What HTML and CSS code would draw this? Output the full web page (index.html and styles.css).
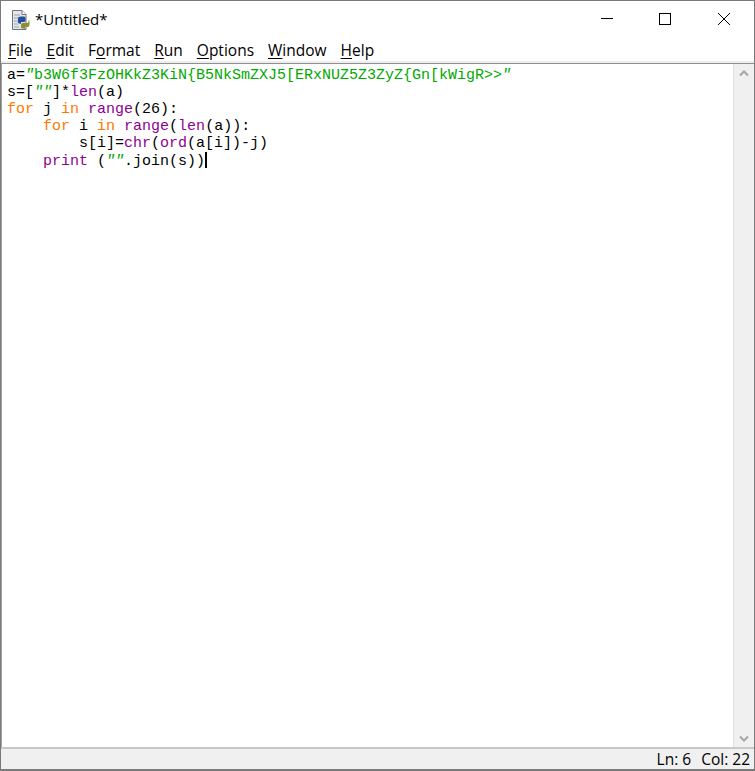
FILE: index.html
```
<!DOCTYPE html>
<html lang="en">
<head>
<meta charset="utf-8">
<title>*Untitled*</title>
<link rel="stylesheet" href="styles.css">
</head>
<body>
<div class="window">
  <header class="titlebar">
    <svg class="app-icon" width="20" height="22" viewBox="0 0 20 22">
      <path d="M2.5 1.5H12L16 5.5V20.5H2.5Z" fill="#e4e6ea" stroke="#6f7480"/>
      <path d="M12 1.5V5.5H16" fill="#fff" stroke="#6f7480"/>
      <path d="M4 6H10M4 9H9M4 12H8M4 15H8M4 18H9" stroke="#9aa0aa"/>
      <path d="M8 14V9.5Q8 7.5 11 7.5H14Q15.5 7.5 15.5 9.5V11.5Q15.5 13 13.5 13H11V15Z" fill="#1f4f9e"/>
      <path d="M11 19V15.5Q11 14 13 14H16.5Q18.5 14 18.5 12.5V11.5H19.5V16Q19.5 18 17.5 18H15V20Z" fill="#8b8f2e"/>
    </svg>
    <span class="title">*Untitled*</span>
    <div class="controls">
      <svg class="control" width="58" height="37" viewBox="0 0 58 37"><path d="M21 17.5H33" stroke="#000"/></svg>
      <svg class="control" width="58" height="37" viewBox="0 0 58 37"><rect x="21.5" y="12.5" width="11" height="11" fill="none" stroke="#000"/></svg>
      <svg class="control" width="58" height="37" viewBox="0 0 58 37"><path d="M22 12L34 24M34 12L22 24" stroke="#000" fill="none"/></svg>
    </div>
  </header>
  <nav class="menubar">
    <span class="menu"><u>F</u>ile</span>
    <span class="menu"><u>E</u>dit</span>
    <span class="menu">F<u>o</u>rmat</span>
    <span class="menu"><u>R</u>un</span>
    <span class="menu"><u>O</u>ptions</span>
    <span class="menu"><u>W</u>indow</span>
    <span class="menu"><u>H</u>elp</span>
  </nav>
  <main class="editor">
    <pre class="code">a=<span class="str"><i>"</i>b3W6f3FzOHKkZ3KiN{B5NkSmZXJ5[ERxNUZ5Z3ZyZ{Gn[kWigR&gt;&gt;<i>"</i></span>
s=[<span class="str"><i>""</i></span>]*<span class="fn">len</span>(a)
<span class="kw">for</span> j <span class="kw">in</span> <span class="fn">range</span>(26):
    <span class="kw">for</span> i <span class="kw">in</span> <span class="fn">range</span>(<span class="fn">len</span>(a)):
        s[i]=<span class="fn">chr</span>(<span class="fn">ord</span>(a[i])-j)
    <span class="fn">print</span> (<span class="str"><i>""</i></span>.join(s))<span class="caret"></span></pre>
    <div class="scrollbar">
      <svg width="20" height="17" viewBox="0 0 20 17"><path d="M6 11.5L10 7.5L14 11.5" fill="none" stroke="#a6a6a6" stroke-width="2"/></svg>
      <svg width="20" height="17" viewBox="0 0 20 17"><path d="M6 6.5L10 10.5L14 6.5" fill="none" stroke="#a6a6a6" stroke-width="2"/></svg>
    </div>
  </main>
  <footer class="statusbar">
    <span>Ln: 6</span>
    <span>Col: 22</span>
  </footer>
</div>
</body>
</html>
```
FILE: styles.css
```
html, body {
  margin: 0;
  padding: 0;
  height: 100%;
  background: #fff;
}
.window {
  box-sizing: border-box;
  width: 755px;
  height: 771px;
  display: flex;
  flex-direction: column;
  border: 1px solid #7a7a7a;
  border-width: 1px 1px 2px 1px;
  font-family: "Open Sans", "Noto Sans", sans-serif;
  color: #000;
}
.titlebar {
  height: 37px;
  flex: none;
  display: flex;
  align-items: center;
  padding-left: 9px;
  background: #fff;
}
.app-icon {
  flex: none;
  margin-right: 5px;
}
.title {
  font-size: 15px;
  flex: 1;
  margin-bottom: 2px;
}
.controls {
  display: flex;
  flex: none;
}
.control {
  display: block;
}
.menubar {
  box-sizing: border-box;
  height: 25px;
  flex: none;
  display: flex;
  align-items: center;
  gap: 14px;
  padding-left: 7px;
  background: #fff;
  border-bottom: 2px solid #eeeeee;
  font-size: 15.5px;
}
.menu {
  white-space: nowrap;
}
.menu u {
  text-underline-offset: 2px;
}
.editor {
  flex: 1;
  min-height: 0;
  display: flex;
  border-top: 1px solid #8f8f8f;
  border-left: 1px solid #a0a0a0;
  background: #fff;
}
.code {
  flex: 1;
  margin: 0;
  padding: 3px 0 0 5px;
  font-family: "Liberation Mono", monospace;
  font-size: 15px;
  line-height: 17px;
  color: #000;
}
.str { color: #00aa00; }
.kw { color: #ff7700; }
.fn { color: #900090; }
.caret {
  display: inline-block;
  width: 2px;
  height: 16px;
  vertical-align: -3px;
  background: #000;
}
.scrollbar {
  width: 20px;
  flex: none;
  display: flex;
  flex-direction: column;
  justify-content: space-between;
  background: #f0f0f0;
  border-left: 1px solid #e0e0e0;
}
.statusbar {
  height: 22px;
  flex: none;
  display: flex;
  justify-content: flex-end;
  align-items: center;
  gap: 10px;
  padding-right: 4px;
  background: #f0f0f0;
  border-top: 2px solid #c8c8c8;
  box-sizing: border-box;
  font-size: 15.5px;
}
```
